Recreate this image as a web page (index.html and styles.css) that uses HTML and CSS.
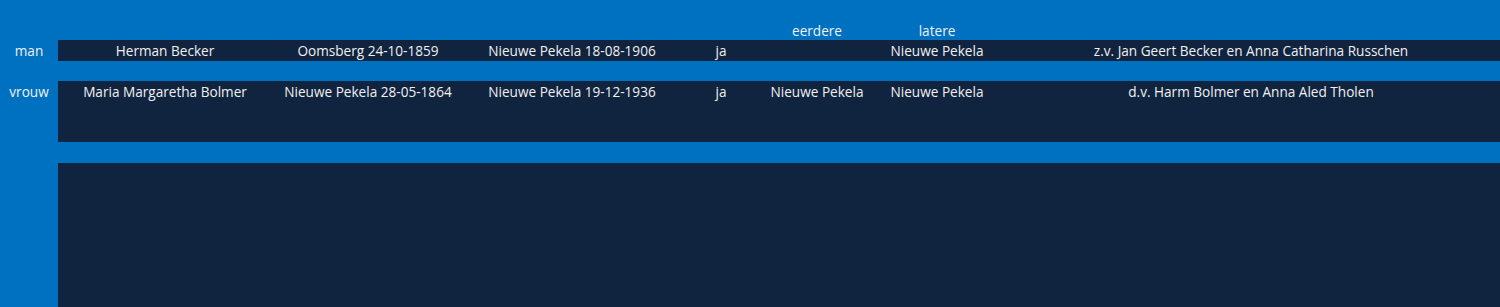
FILE: index.html
```html
<!DOCTYPE html>
<html lang="nl">
<head>
<meta charset="utf-8">
<title>Becker – Bolmer</title>
<link rel="stylesheet" href="styles.css">
</head>
<body>
<div class="sheet">
  <div class="row head">
    <div class="lbl"></div>
    <div class="c"></div>
    <div class="c"></div>
    <div class="c"></div>
    <div class="c"></div>
    <div class="c">eerdere</div>
    <div class="c">latere</div>
    <div class="c"></div>
  </div>
  <div class="row data man">
    <div class="lbl">man</div>
    <div class="c">Herman Becker</div>
    <div class="c">Oomsberg 24-10-1859</div>
    <div class="c">Nieuwe Pekela 18-08-1906</div>
    <div class="c">ja</div>
    <div class="c"></div>
    <div class="c">Nieuwe Pekela</div>
    <div class="c">z.v. Jan Geert Becker en Anna Catharina Russchen</div>
  </div>
  <div class="row data vrouw">
    <div class="lbl">vrouw</div>
    <div class="c">Maria Margaretha Bolmer</div>
    <div class="c">Nieuwe Pekela 28-05-1864</div>
    <div class="c">Nieuwe Pekela 19-12-1936</div>
    <div class="c">ja</div>
    <div class="c">Nieuwe Pekela</div>
    <div class="c">Nieuwe Pekela</div>
    <div class="c">d.v. Harm Bolmer en Anna Aled Tholen</div>
  </div>
  <div class="row data rest">
    <div class="lbl"></div>
    <div class="c"></div>
    <div class="c"></div>
    <div class="c"></div>
    <div class="c"></div>
    <div class="c"></div>
    <div class="c"></div>
    <div class="c"></div>
  </div>
</div>
</body>
</html>
```
FILE: styles.css
```css
html, body {
  margin: 0;
  padding: 0;
  background: #0070c0;
  height: 100%;
  overflow: hidden;
}
.sheet {
  font-family: "Open Sans", "Liberation Sans", sans-serif;
  font-size: 13.6px;
  color: #f0f0f0;
  display: flex;
  flex-direction: column;
}
.row {
  display: grid;
  grid-template-columns: 58px 214px 192px 216px 82px 110px 130px 1fr;
}
.c, .lbl {
  text-align: center;
  white-space: nowrap;
  line-height: 18px;
}
.head {
  height: 40px;
  align-items: end;
}
.head .c {
  padding-bottom: 0;
}
.data .c {
  background: #10233f;
  padding-top: 2px;
}
.data .lbl {
  padding-top: 2px;
}
.man {
  height: 21px;
  margin-bottom: 20px;
}
.vrouw {
  height: 61px;
  margin-bottom: 21px;
}
.rest {
  height: 150px;
}
```
